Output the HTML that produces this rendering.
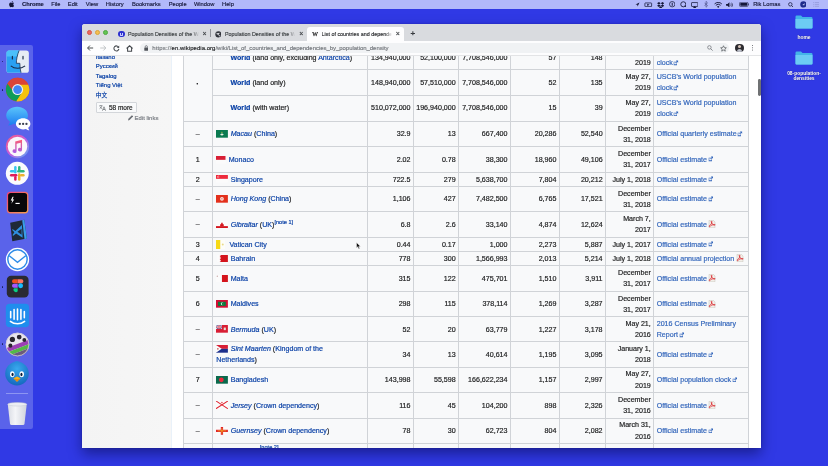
<!DOCTYPE html>
<html lang="en">
<head>
<meta charset="utf-8">
<title>List of countries and dependencies by population density - Wikipedia</title>
<style>
*{box-sizing:border-box;margin:0;padding:0}
html,body{width:828px;height:466px;overflow:hidden}
body{position:relative;background:#3039e5;font-family:"Liberation Sans","Noto Sans CJK SC",sans-serif;color:#202122}
.abs{position:absolute}
#root{position:absolute;left:0;top:0;width:828px;height:466px;will-change:transform;overflow:hidden}
/* desktop */
#desk{position:absolute;left:0;top:0;width:828px;height:466px;background:#3039e5}
/* menu bar */
#menubar{position:absolute;left:0;top:0;width:828px;height:9px;background:#b2b9fa;font-size:5.75px;line-height:9px;color:#16183a;white-space:nowrap}
#menubar span{position:absolute;top:0}
#menubar b{font-weight:bold}
#menubar svg{position:absolute}
/* dock */
#dock{position:absolute;left:0;top:45px;width:33px;height:384px;background:#5a63ea;border-radius:0 2px 2px 0}
#dock .ic{position:absolute;left:6px;width:22px;height:22px}
#dock .dot{position:absolute;left:1.5px;width:1.6px;height:1.6px;border-radius:50%;background:#1a1d5c}
/* folders */
.folder{position:absolute;width:18px;height:14px}
.flabel{position:absolute;font-size:4.9px;font-weight:bold;color:#fff;text-align:center;width:60px;line-height:5.4px;text-shadow:0 0 1px rgba(0,0,40,.6)}
/* window */
#win{position:absolute;left:82px;top:24px;width:679px;height:424px;background:#fff;border-radius:3px 3px 0 0;overflow:hidden}
#shadow{position:absolute;left:82px;top:24px;width:679px;height:424px;border-radius:3px;box-shadow:0 6px 13px rgba(5,8,70,.5),0 0 2px rgba(5,8,70,.3)}
#tabbar{position:absolute;left:0;top:0;width:679px;height:17px;background:#d9dbdf}
#toolbar{position:absolute;left:0;top:17px;width:679px;height:14.5px;background:#fdfdfe;border-bottom:1px solid #e3e4e6}
.tl{position:absolute;top:6.3px;width:4.9px;height:4.9px;border-radius:50%}
.tabt{position:absolute;top:5.9px;height:8px;font-size:5.4px;line-height:8px;color:#3c4043;white-space:nowrap;overflow:hidden}
.tabx{position:absolute;top:6.3px;font-size:7px;line-height:8px;color:#3f4246;-webkit-text-stroke:.2px #3f4246}
#atab{position:absolute;left:224.6px;top:3px;width:97.4px;height:14px;background:#fdfdfe;border-radius:3px 3px 0 0}
#pill{position:absolute;left:57.5px;top:2px;width:589px;height:10.4px;border-radius:5.2px;background:#f0f2f4}
#url{position:absolute;left:70.2px;top:3.4px;font-size:5.98px;line-height:8px;white-space:nowrap;color:#74787d;letter-spacing:0}
#url b{font-weight:normal;color:#222426}
/* page */
#page{position:absolute;left:0;top:31px;width:679px;height:393px;background:#fff;overflow:hidden}
#side{position:absolute;left:0;top:31px;width:88.6px;height:393px;background:linear-gradient(90deg,#f4f4f4,#f6f6f6)}
#sideline{position:absolute;left:88.6px;top:31px;width:1px;height:393px;background:#e9f1f9}
.lang{position:absolute;left:13.8px;font-size:5.95px;line-height:8px;color:#0a41a6;white-space:nowrap}
#more{position:absolute;left:13.8px;top:78px;width:40.8px;height:11.4px;border:1px solid #d3d6da;background:#f9fafb;border-radius:1px;font-size:6.5px;line-height:9.6px;color:#222;white-space:nowrap}
#edit{position:absolute;left:52.6px;top:90px;font-size:5.95px;line-height:8px;color:#7a7e84;white-space:nowrap}
#sbar{position:absolute;left:675.9px;top:55px;width:2.8px;height:16.6px;border-radius:1.4px;background:#6f7173}
/* table */
.tbg{position:absolute;background:#f8f9fa}
.c{position:absolute;display:flex;align-items:center;font-size:7.1px;line-height:11.3px;padding:0 2.8px;white-space:nowrap;color:#202122}
.c>div{width:100%;position:relative;top:1px}
.rk{justify-content:center;text-align:center}
.nu{text-align:right}
.nm,.sr{text-align:left}
.nm{padding-left:4px}
.sr{padding-left:3.1px}
.c,.lang,#more,#edit{-webkit-text-stroke:.18px currentColor}
#menubar,.tabt,#url{-webkit-text-stroke:.15px currentColor}
.c a{color:#0a41a6}
.c a.x{color:#3366bb}
.c sup{font-size:5.6px;line-height:1;vertical-align:baseline;position:relative;top:-2.4px}
.fl{display:inline-block;vertical-align:-1.5px;margin-right:.5px}
.vn{margin-left:3.6px}
.ext{display:inline-block;margin-left:0.6px;vertical-align:-0.3px}
.pdf{display:inline-block;vertical-align:-1.4px;margin-left:-0.6px}
.hl{position:absolute;height:1px;background:#d0d3d7}
.vl{position:absolute;width:1px;background:#d0d3d7}
.cv{position:absolute;background:#f8f9fa}
#cursor{position:absolute;left:356.3px;top:241.6px}
</style>
</head>
<body>
<div id="root">
<div id="desk"></div>

<!-- menu bar -->
<div id="menubar">
<svg style="left:8.6px;top:1.2px" width="5.2" height="6.4" viewBox="0 0 26 32"><path d="M21.500 17c0-4 3.300-5.800 3.400-5.900-1.900-2.700-4.700-3.100-5.700-3.100-2.400-.2-4.700 1.400-6 1.400-1.200 0-3.100-1.400-5.100-1.300C5.500 8.100 3.100 9.600 1.800 11.900-.9 16.600 1.100 23.600 3.700 27.400 5 29.300 6.500 31.400 8.500 31.300c2-.1 2.700-1.300 5.100-1.300 2.400 0 3 1.300 5.100 1.200 2.100 0 3.500-1.900 4.700-3.800 1.500-2.200 2.100-4.300 2.100-4.400-.1 0-4-1.500-4-6zM17.600 5.300C18.700 4 19.400 2.200 19.200.400c-1.500.1-3.400 1-4.500 2.300-1 1.100-1.900 3-1.600 4.700 1.700.1 3.400-.9 4.500-2.100z" fill="#16183a"/></svg>
<span style="left:22px"><b>Chrome</b></span>
<span style="left:51.3px">File</span>
<span style="left:67.8px">Edit</span>
<span style="left:85.8px">View</span>
<span style="left:105.8px">History</span>
<span style="left:131.9px">Bookmarks</span>
<span style="left:168.7px">People</span>
<span style="left:193.9px">Window</span>
<span style="left:222px">Help</span>
<!-- right status icons -->
<svg style="left:634.5px;top:2px" width="5" height="5" viewBox="0 0 10 10"><path d="M9 1L1 4.800l3.600.6.600 3.600z" fill="#16183a"/></svg>
<svg style="left:644px;top:1.800px" width="8.500" height="5.600" viewBox="0 0 17 11"><rect x="1.800" y="1.800" width="13.400" height="7.400" rx="1" fill="none" stroke="#16183a" stroke-width="1.500"/><path d="M6.500 3.300l4.500 2.200-4.500 2.200z" fill="#16183a"/></svg>
<svg style="left:656.500px;top:1.500px" width="7.400" height="6.400" viewBox="0 0 15 13"><path d="M4 0L0 2.600 4 5.200 7.500 2.600zM11 0L7.500 2.600 11 5.200 15 2.600zM0 7.600L4 10.200 7.500 7.600 4 5.200zM11 5.200L7.500 7.600 11 10.200 15 7.600zM4 11l3.500 2.200L11 11 7.500 8.700z" fill="#16183a"/></svg>
<svg style="left:668.600px;top:1.400px" width="6.400" height="6.400" viewBox="0 0 13 13"><circle cx="6.500" cy="6.500" r="5.500" fill="none" stroke="#16183a" stroke-width="1.500"/><rect x="5.500" y="3" width="2" height="7" rx="1" fill="#16183a"/></svg>
<svg style="left:679.700px;top:1.400px" width="6.600" height="6.600" viewBox="0 0 13 13"><circle cx="6.500" cy="6.500" r="5" fill="none" stroke="#16183a" stroke-width="1.700"/><path d="M9.500 9.500l2.500 2.500" stroke="#16183a" stroke-width="1.700"/></svg>
<svg style="left:690.500px;top:1.600px" width="7.400" height="6" viewBox="0 0 15 12"><rect x="1" y="1" width="13" height="8" rx="1" fill="none" stroke="#16183a" stroke-width="1.500"/><path d="M4 12l3.500-4 3.500 4z" fill="#16183a"/></svg>
<svg style="left:703.500px;top:1.300px" width="4.600" height="6.600" viewBox="0 0 9 13"><path d="M1 3.500l6 6-3 2.800V.700l3 2.800-6 6" fill="none" stroke="#3c4078" stroke-width="1.100"/></svg>
<svg style="left:714px;top:1.600px" width="8.400" height="6" viewBox="0 0 17 12"><path d="M8.500 12l2.400-2.900a3.400 3.400 0 0 0-4.800 0z" fill="#16183a"/><path d="M3.700 6.600a6.800 6.800 0 0 1 9.600 0M1.200 3.800a10.400 10.400 0 0 1 14.600 0" fill="none" stroke="#16183a" stroke-width="1.900"/></svg>
<svg style="left:726px;top:1.700px" width="7.400" height="5.800" viewBox="0 0 15 12"><path d="M0 4h3l4-3.500v11L3 8H0z" fill="#16183a"/><path d="M9.500 3.500a3.500 3.500 0 0 1 0 5M11.500 1.500a6.300 6.300 0 0 1 0 9" fill="none" stroke="#16183a" stroke-width="1.300"/></svg>
<svg style="left:738.600px;top:2.200px" width="10.400" height="4.800" viewBox="0 0 21 10"><rect x=".7" y=".7" width="17.600" height="8.600" rx="2" fill="none" stroke="#16183a" stroke-width="1.200"/><rect x="2.300" y="2.300" width="14.400" height="5.400" rx=".8" fill="#16183a"/><rect x="19.300" y="3.200" width="1.500" height="3.600" rx=".6" fill="#16183a"/></svg>
<span style="left:753.200px">Rik Lomas</span>
<svg style="left:787.500px;top:1.700px" width="5.800" height="5.800" viewBox="0 0 12 12"><circle cx="4.800" cy="4.800" r="3.600" fill="none" stroke="#16183a" stroke-width="1.500"/><path d="M7.500 7.500l3.700 3.700" stroke="#16183a" stroke-width="1.600"/></svg>
<svg style="left:799.700px;top:1.200px" width="6.800" height="6.800" viewBox="0 0 14 14"><circle cx="7" cy="7" r="6.500" fill="#1d2a8c"/><path d="M4 9l6-4.500L8.200 9.800 7 7.600z" fill="#dfe4ff"/></svg>
<svg style="left:812.500px;top:2.200px" width="6.400" height="4.800" viewBox="0 0 13 10"><path d="M0 1h1.600M3.400 1H13M0 5h1.600M3.400 5H13M0 9h1.600M3.400 9H13" stroke="#8f95d6" stroke-width="1.500"/></svg>
</div>

<!-- desktop folders -->
<svg class="folder" style="left:795px;top:15px" viewBox="0 0 36 28"><path d="M1 3.500Q1 1 3.500 1H12l3 3h17.500Q35 4 35 6.500V25q0 2-2 2H3q-2 0-2-2z" fill="#43b4e8"/><path d="M1 8h34v17q0 2-2 2H3q-2 0-2-2z" fill="#6ccbf4"/></svg>
<div class="flabel" style="left:774px;top:34.600px">home</div>
<svg class="folder" style="left:795px;top:51.300px" viewBox="0 0 36 28"><path d="M1 3.500Q1 1 3.500 1H12l3 3h17.500Q35 4 35 6.500V25q0 2-2 2H3q-2 0-2-2z" fill="#43b4e8"/><path d="M1 8h34v17q0 2-2 2H3q-2 0-2-2z" fill="#6ccbf4"/></svg>
<div class="flabel" style="left:774px;top:70.600px">08-population-<br>densities</div>

<!-- dock -->
<div id="dock">
<div class="dot" style="top:15.600px"></div>
<div class="dot" style="top:44px"></div>
<div class="dot" style="top:241.200px"></div>
<div class="dot" style="top:298.200px"></div>
<!-- finder -->
<svg class="ic" style="top:4.7px;left:5.5px;width:23.4px;height:23.4px" viewBox="0 0 44 44"><defs><clipPath id="fc"><rect x="1" y="1" width="42" height="42" rx="5"/></clipPath></defs><g clip-path="url(#fc)"><rect width="44" height="44" fill="#e6ecf4"/><path d="M0 0H25C21 10 19.500 18 19.500 25H26C26 32 27 38 28.500 44H0z" fill="#2aa0f2"/><path d="M0 0H25C23 5 22 8 21 12H0z" fill="#4cc0fa"/><path d="M9 30c7 6 19 6 27 0" fill="none" stroke="#1b2b48" stroke-width="2"/><path d="M12 12v5M32 12v5" stroke="#1b2b48" stroke-width="2.200" stroke-linecap="round"/><path d="M25 0C21 10 19.500 18 19.500 25H26C26 32 27 38 28.500 44" fill="none" stroke="#1b2b48" stroke-width="1.400"/></g></svg>
<!-- chrome -->
<svg class="ic" style="top:32.2px;left:4.6px;width:25.2px;height:25.2px" viewBox="0 0 44 44"><circle cx="22" cy="22" r="20.500" fill="#db4437"/><path d="M22 22L4.200 11.800A20.500 20.500 0 0 0 20 42.400L30 27z" fill="#0f9d58"/><path d="M22 22H42.400A20.500 20.500 0 0 1 20 42.400L30.500 26z" fill="#f4c20d"/><path d="M22 13H40.400A20.500 20.500 0 0 1 42.400 22 20.500 20.500 0 0 1 20 42.400L30 27z" fill="#f4c20d"/><path d="M4.200 11.800A20.500 20.500 0 0 1 40.400 13H22L13 23z" fill="#db4437"/><circle cx="22" cy="22" r="9.600" fill="#f1f1f1"/><circle cx="22" cy="22" r="7.600" fill="#4285f4"/></svg>
<!-- messages -->
<svg class="ic" style="top:60.4px;left:4.6px;width:26.6px;height:26.6px" viewBox="0 0 44 44"><defs><linearGradient id="mg" x1="0" y1="0" x2="0" y2="1"><stop offset="0" stop-color="#5bc4fb"/><stop offset="1" stop-color="#1b7cf0"/></linearGradient></defs><path d="M20 3c10 0 18 6.500 18 14.500S30 32 20 32c-2 0-4-.3-5.800-.8C11 33.500 7.500 34 5 34c1.500-1.800 2.800-4 3-6.300C4.400 25 2 21.500 2 17.500 2 9.500 10 3 20 3z" fill="url(#mg)"/><path d="M30 22c6.600 0 12 4 12 9.200 0 2.600-1.400 5-3.700 6.600.2 1.500 1 3 2 4-2 0-4-.6-5.600-2-1.500.4-3 .6-4.700.6-6.600 0-12-4.100-12-9.200S23.400 22 30 22z" fill="#fff"/><circle cx="24.500" cy="31.300" r="1.900" fill="#3a3f50"/><circle cx="30" cy="31.300" r="1.900" fill="#3a3f50"/><circle cx="35.500" cy="31.300" r="1.900" fill="#3a3f50"/></svg>
<!-- itunes -->
<svg class="ic" style="top:88.5px;left:4.7px;width:25.0px;height:25.0px" viewBox="0 0 44 44"><defs><linearGradient id="ig" x1="0" y1="0" x2="1" y2="1"><stop offset="0" stop-color="#fb5c74"/><stop offset=".5" stop-color="#c75ce0"/><stop offset="1" stop-color="#4fb0f5"/></linearGradient><linearGradient id="ig2" x1="0" y1="0" x2="0" y2="1"><stop offset="0" stop-color="#fb5c74"/><stop offset="1" stop-color="#a85ce8"/></linearGradient></defs><circle cx="22" cy="22" r="20.500" fill="url(#ig)"/><circle cx="22" cy="22" r="17.200" fill="#fbf7fb"/><path d="M18 13l12-2.800v17.300a3.600 3.200 0 1 1-2.400-3V15.500l-7.200 1.700v13a3.600 3.200 0 1 1-2.400-3z" fill="url(#ig2)"/></svg>
<!-- slack -->
<svg class="ic" style="top:116.4px;left:4.9px;width:24.6px;height:24.6px" viewBox="0 0 44 44"><circle cx="22" cy="22" r="20.500" fill="#fbfbfd"/><g stroke-width="4.400" stroke-linecap="round"><path d="M18.500 11v9" stroke="#36c5f0"/><path d="M11 18.500h4" stroke="#36c5f0"/><path d="M24 18.500h9" stroke="#2eb67d"/><path d="M25.500 11v4" stroke="#2eb67d"/><path d="M25.500 24v9" stroke="#ecb22e"/><path d="M29 25.500h4" stroke="#ecb22e"/><path d="M11 25.500h9" stroke="#e01e5a"/><path d="M18.500 29v4" stroke="#e01e5a"/></g></svg>
<!-- terminal (hyper) -->
<svg class="ic" style="top:146.2px;left:5.6px;width:23.2px;height:23.2px" viewBox="0 0 44 44"><defs><linearGradient id="hg" x1="0" y1="0" x2="1" y2="1"><stop offset="0" stop-color="#f0417c"/><stop offset="1" stop-color="#f5a04a"/></linearGradient></defs><rect x="1.500" y="1.500" width="41" height="41" rx="7" fill="url(#hg)"/><rect x="4" y="4" width="36" height="36" rx="5" fill="#07070a"/><path d="M12.500 11l-3.500 7h3l-1.800 6 5.300-8h-3l2-5z" fill="#fff"/><rect x="18" y="22.500" width="8" height="2.200" fill="#fff"/></svg>
<!-- vscode -->
<svg class="ic" style="top:174.1px;left:5.7px;width:23.0px;height:23.0px" viewBox="0 0 44 44"><path d="M8 7L35 1.500l5 36L12 42.500z" fill="#1f2937"/><path d="M35 1.500l5 36-4.500 1L31 2.300z" fill="#3a9de8"/><path d="M30.500 11.500L18 23l-5-3.500-1.500 1.300 4.500 4.700-3.700 5.500 1.800 1 5.200-4.500 12.500 8.500z M29.800 18.500v11.500l-8-5.800z" fill="#2f8fe0" fill-rule="evenodd"/></svg>
<!-- airmail -->
<svg class="ic" style="top:201.5px;left:4.7px;width:25.0px;height:25.0px" viewBox="0 0 44 44"><circle cx="22" cy="22" r="20.500" fill="#fdfeff"/><circle cx="22" cy="22" r="17" fill="none" stroke="#2d8be8" stroke-width="2.600"/><path d="M7.500 15.500L22 27l14.500-11.500" fill="none" stroke="#2d8be8" stroke-width="2.400"/></svg>
<!-- figma -->
<svg class="ic" style="top:230.3px;left:5.5px;width:23.4px;height:23.4px" viewBox="0 0 44 44"><rect x="1.500" y="1.500" width="41" height="41" rx="8" fill="#2a2a32"/><path d="M15 8h7v7.500h-7a3.750 3.750 0 0 1 0-7.500z" fill="#f24e1e"/><path d="M22 8h7a3.750 3.750 0 0 1 0 7.500h-7z" fill="#ff7262"/><path d="M15 16.500h7V24h-7a3.750 3.750 0 0 1 0-7.500z" fill="#a259ff"/><circle cx="27.500" cy="20.200" r="4.600" fill="#1abcfe"/><path d="M15 25h7v5.500a4.200 4.200 0 1 1-7-5.500z" fill="#0acf83"/></svg>
<!-- intercom -->
<svg class="ic" style="top:257.7px;left:4.7px;width:25.0px;height:25.0px" viewBox="0 0 44 44"><rect x="1.500" y="1.500" width="41" height="41" rx="7" fill="#1f8ded"/><g stroke="#fff" stroke-width="2.800" stroke-linecap="round"><path d="M10 15v11M16 11.500v17M22 10.500v19M28 11.500v17M34 15v11"/><path d="M9.500 32.500c7 5.500 18 5.500 25 0" fill="none"/></g></svg>
<!-- film -->
<svg class="ic" style="top:286.5px;left:4.7px;width:25.0px;height:25.0px" viewBox="0 0 44 44"><defs><clipPath id="cc"><circle cx="22" cy="22" r="20.500"/></clipPath></defs><circle cx="22" cy="22" r="20.500" fill="#e9e6ee"/><g clip-path="url(#cc)"><path d="M-2 30L46 12v8L-2 38z" fill="#9b3fb4"/><path d="M-2 38L46 20v7L-2 45z" fill="#54b848"/><path d="M-2 45L46 27v20H-2z" fill="#6b5a7c"/></g><circle cx="13" cy="13" r="4.600" fill="#2a2630"/><circle cx="25" cy="9" r="4.200" fill="#2a2630"/><circle cx="9.500" cy="24" r="3.600" fill="#2a2630"/><circle cx="34" cy="14" r="3.400" fill="#2a2630"/><circle cx="22" cy="22" r="20" fill="none" stroke="#cfc9d6" stroke-width="1.400"/></svg>
<!-- tweetbot -->
<svg class="ic" style="top:314.5px;left:4.2px;width:26.0px;height:26.0px" viewBox="0 0 44 44"><defs><radialGradient id="tg" cx=".5" cy=".3" r=".8"><stop offset="0" stop-color="#39a9ee"/><stop offset="1" stop-color="#0f5fb8"/></radialGradient></defs><circle cx="22" cy="23" r="20" fill="url(#tg)"/><path d="M15 4l7-2.500 7 2.500z" fill="#2a8ee0"/><ellipse cx="14" cy="24" rx="3.800" ry="5" fill="#fff"/><ellipse cx="30" cy="24" rx="3.800" ry="5" fill="#fff"/><ellipse cx="14.500" cy="24.500" rx="1.800" ry="3" fill="#0b1e3a"/><ellipse cx="29.500" cy="24.500" rx="1.800" ry="3" fill="#0b1e3a"/><path d="M16 31l6-3 6 3-6 6z" fill="#f7b31c"/><path d="M16 31l6 1.500 6-1.500-6 6z" fill="#e88a14"/></svg>
<div class="abs" style="left:6px;top:347.500px;width:22px;height:.7px;background:#8d95f2"></div>
<!-- trash -->
<svg class="ic" style="top:357px;left:7px;width:20.500px;height:23.500px" viewBox="0 0 41 47"><defs><linearGradient id="trg" x1="0" y1="0" x2="1" y2="0"><stop offset="0" stop-color="#d9dce4"/><stop offset=".4" stop-color="#f4f5f8"/><stop offset="1" stop-color="#cfd3dc"/></linearGradient></defs><path d="M1.500 4h38l-4.500 39.500q-.3 2.500-3 2.500H9q-2.700 0-3-2.500z" fill="url(#trg)"/><ellipse cx="20.500" cy="4.500" rx="19" ry="3.600" fill="#eceef3" stroke="#c3c7d2" stroke-width="1"/></svg>

</div>

<!-- window -->
<div id="shadow"></div>
<div id="win">
<div id="page"></div>
<div id="side"></div><div id="sideline"></div>
<div class="lang" style="top:29.200px">Italiano</div>
<div class="lang" style="top:38.100px">Русский</div>
<div class="lang" style="top:48.100px">Tagalog</div>
<div class="lang" style="top:56.900px">Tiếng Việt</div>
<div class="lang" style="top:67px;font-size:5.700px">中文</div>
<div id="more"><svg style="position:absolute;left:2.600px;top:1.900px" width="7" height="6" viewBox="0 0 14 12"><path d="M0.500 1.500H7M3.700 0v1.500M1.200 7.500C3.600 6.300 5.300 4 5.600 1.500M1.800 3.500C2.800 5.500 4.500 6.800 6.300 7.300" fill="none" stroke="#54595d" stroke-width="1.100"/><path d="M6.800 11.500L10 3.500l3.200 8M7.900 9h4.200" fill="none" stroke="#54595d" stroke-width="1.200"/></svg><span style="position:absolute;left:12.100px;top:0">58 more</span></div>
<div id="edit"><svg style="position:absolute;left:-6.600px;top:1.300px" width="5.400" height="5.400" viewBox="0 0 11 11"><path d="M0 11l.8-3.200L8 .6l2.400 2.400-7.200 7.200z" fill="#6a6e74"/></svg>Edit links</div>
<div class="tbg" style="left:101px;top:31px;width:565.5px;height:393px"></div>
<div class="c rk" style="left:101px;top:21.2px;width:29.3px;height:75.8px"><div><span style="font-weight:bold;font-size:8px">·</span></div></div>
<div class="c nm" style="left:130.3px;top:21.2px;width:155.2px;height:24.4px"><div><span class="fl" style="display:inline-block;width:11.7px;height:7.7px"></span>&nbsp;<b><a class="">World</a></b> (land only, excluding <a class="">Antarctica</a>)</div></div>
<div class="c nu" style="left:285.5px;top:21.2px;width:45.8px;height:24.4px"><div>134,940,000</div></div>
<div class="c nu" style="left:331.3px;top:21.2px;width:45.2px;height:24.4px"><div>52,100,000</div></div>
<div class="c nu" style="left:376.5px;top:21.2px;width:51.8px;height:24.4px"><div>7,708,546,000</div></div>
<div class="c nu" style="left:428.3px;top:21.2px;width:48.9px;height:24.4px"><div>57</div></div>
<div class="c nu" style="left:477.2px;top:21.2px;width:46.2px;height:24.4px"><div>148</div></div>
<div class="c nu" style="left:523.4px;top:21.2px;width:48.2px;height:24.4px"><div>May 27,<br>2019</div></div>
<div class="c sr" style="left:571.6px;top:21.2px;width:94.9px;height:24.4px"><div><a class="x">USCB's World population<br>clock</a><svg class="ext" viewBox="0 0 12 12" width="5.6" height="5.6"><path d="M1.5 3.5h5v1.2H2.7v4.6h4.6V7h1.2v4.5h-7z" fill="#36b"/><path d="M6 1h5v5L9.2 4.2 6.3 7.1 4.9 5.7 7.8 2.8z" fill="#36b"/></svg></div></div>
<div class="c nm" style="left:130.3px;top:45.6px;width:155.2px;height:25.7px"><div><span class="fl" style="display:inline-block;width:11.7px;height:7.7px"></span>&nbsp;<b><a class="">World</a></b> (land only)</div></div>
<div class="c nu" style="left:285.5px;top:45.6px;width:45.8px;height:25.7px"><div>148,940,000</div></div>
<div class="c nu" style="left:331.3px;top:45.6px;width:45.2px;height:25.7px"><div>57,510,000</div></div>
<div class="c nu" style="left:376.5px;top:45.6px;width:51.8px;height:25.7px"><div>7,708,546,000</div></div>
<div class="c nu" style="left:428.3px;top:45.6px;width:48.9px;height:25.7px"><div>52</div></div>
<div class="c nu" style="left:477.2px;top:45.6px;width:46.2px;height:25.7px"><div>135</div></div>
<div class="c nu" style="left:523.4px;top:45.6px;width:48.2px;height:25.7px"><div>May 27,<br>2019</div></div>
<div class="c sr" style="left:571.6px;top:45.6px;width:94.9px;height:25.7px"><div><a class="x">USCB's World population<br>clock</a><svg class="ext" viewBox="0 0 12 12" width="5.6" height="5.6"><path d="M1.5 3.5h5v1.2H2.7v4.6h4.6V7h1.2v4.5h-7z" fill="#36b"/><path d="M6 1h5v5L9.2 4.2 6.3 7.1 4.9 5.7 7.8 2.8z" fill="#36b"/></svg></div></div>
<div class="c nm" style="left:130.3px;top:71.3px;width:155.2px;height:25.7px"><div><span class="fl" style="display:inline-block;width:11.7px;height:7.7px"></span>&nbsp;<b><a class="">World</a></b> (with water)</div></div>
<div class="c nu" style="left:285.5px;top:71.3px;width:45.8px;height:25.7px"><div>510,072,000</div></div>
<div class="c nu" style="left:331.3px;top:71.3px;width:45.2px;height:25.7px"><div>196,940,000</div></div>
<div class="c nu" style="left:376.5px;top:71.3px;width:51.8px;height:25.7px"><div>7,708,546,000</div></div>
<div class="c nu" style="left:428.3px;top:71.3px;width:48.9px;height:25.7px"><div>15</div></div>
<div class="c nu" style="left:477.2px;top:71.3px;width:46.2px;height:25.7px"><div>39</div></div>
<div class="c nu" style="left:523.4px;top:71.3px;width:48.2px;height:25.7px"><div>May 27,<br>2019</div></div>
<div class="c sr" style="left:571.6px;top:71.3px;width:94.9px;height:25.7px"><div><a class="x">USCB's World population<br>clock</a><svg class="ext" viewBox="0 0 12 12" width="5.6" height="5.6"><path d="M1.5 3.5h5v1.2H2.7v4.6h4.6V7h1.2v4.5h-7z" fill="#36b"/><path d="M6 1h5v5L9.2 4.2 6.3 7.1 4.9 5.7 7.8 2.8z" fill="#36b"/></svg></div></div>
<div class="c rk" style="left:101px;top:97px;width:29.3px;height:25.8px"><div><span style="position:relative;top:-0.6px">–</span></div></div>
<div class="c nm" style="left:130.3px;top:97px;width:155.2px;height:25.8px"><div><svg class="fl" viewBox="0 0 23 15" width="11.9" height="7.7" preserveAspectRatio="none"><rect width="23" height="15" fill="#0a7a50"/><path d="M8 9.5 Q11.5 4 15 9.5 Q11.5 11.5 8 9.5Z" fill="#e8f0e0"/><circle cx="11.5" cy="4.3" r="1" fill="#f7d93a"/></svg>&nbsp;<i><a class="">Macau</a></i> (<a class="">China</a>)</div></div>
<div class="c nu" style="left:285.5px;top:97px;width:45.8px;height:25.8px"><div>32.9</div></div>
<div class="c nu" style="left:331.3px;top:97px;width:45.2px;height:25.8px"><div>13</div></div>
<div class="c nu" style="left:376.5px;top:97px;width:51.8px;height:25.8px"><div>667,400</div></div>
<div class="c nu" style="left:428.3px;top:97px;width:48.9px;height:25.8px"><div>20,286</div></div>
<div class="c nu" style="left:477.2px;top:97px;width:46.2px;height:25.8px"><div>52,540</div></div>
<div class="c nu" style="left:523.4px;top:97px;width:48.2px;height:25.8px"><div>December<br>31, 2018</div></div>
<div class="c sr" style="left:571.6px;top:97px;width:94.9px;height:25.8px"><div><a class="x">Official quarterly estimate</a><svg class="ext" viewBox="0 0 12 12" width="5.6" height="5.6"><path d="M1.5 3.5h5v1.2H2.7v4.6h4.6V7h1.2v4.5h-7z" fill="#36b"/><path d="M6 1h5v5L9.2 4.2 6.3 7.1 4.9 5.7 7.8 2.8z" fill="#36b"/></svg></div></div>
<div class="c rk" style="left:101px;top:122.8px;width:29.3px;height:25.2px"><div>1</div></div>
<div class="c nm" style="left:130.3px;top:122.8px;width:155.2px;height:25.2px"><div><svg class="fl" viewBox="0 0 23 15" width="9.5" style="vertical-align:-2px" height="7.7" preserveAspectRatio="none"><rect width="23" height="15" fill="#fbfbfb"/><rect width="23" height="7.5" fill="#d81e34"/></svg><span style="margin-left:0.4px">&nbsp;<a class="">Monaco</a></span></div></div>
<div class="c nu" style="left:285.5px;top:122.8px;width:45.8px;height:25.2px"><div>2.02</div></div>
<div class="c nu" style="left:331.3px;top:122.8px;width:45.2px;height:25.2px"><div>0.78</div></div>
<div class="c nu" style="left:376.5px;top:122.8px;width:51.8px;height:25.2px"><div>38,300</div></div>
<div class="c nu" style="left:428.3px;top:122.8px;width:48.9px;height:25.2px"><div>18,960</div></div>
<div class="c nu" style="left:477.2px;top:122.8px;width:46.2px;height:25.2px"><div>49,106</div></div>
<div class="c nu" style="left:523.4px;top:122.8px;width:48.2px;height:25.2px"><div>December<br>31, 2017</div></div>
<div class="c sr" style="left:571.6px;top:122.8px;width:94.9px;height:25.2px"><div><a class="x">Official estimate</a><svg class="ext" viewBox="0 0 12 12" width="5.6" height="5.6"><path d="M1.5 3.5h5v1.2H2.7v4.6h4.6V7h1.2v4.5h-7z" fill="#36b"/><path d="M6 1h5v5L9.2 4.2 6.3 7.1 4.9 5.7 7.8 2.8z" fill="#36b"/></svg></div></div>
<div class="c rk" style="left:101px;top:148px;width:29.3px;height:14.5px"><div>2</div></div>
<div class="c nm" style="left:130.3px;top:148px;width:155.2px;height:14.5px"><div><svg class="fl" viewBox="0 0 23 15" width="11.9" height="7.7" preserveAspectRatio="none"><rect width="23" height="15" fill="#fbfbfb"/><rect width="23" height="7.5" fill="#ee2a3c"/><circle cx="5" cy="3.8" r="2.2" fill="#fff"/><circle cx="6" cy="3.8" r="2" fill="#ee2a3c"/></svg>&nbsp;<a class="">Singapore</a></div></div>
<div class="c nu" style="left:285.5px;top:148px;width:45.8px;height:14.5px"><div>722.5</div></div>
<div class="c nu" style="left:331.3px;top:148px;width:45.2px;height:14.5px"><div>279</div></div>
<div class="c nu" style="left:376.5px;top:148px;width:51.8px;height:14.5px"><div>5,638,700</div></div>
<div class="c nu" style="left:428.3px;top:148px;width:48.9px;height:14.5px"><div>7,804</div></div>
<div class="c nu" style="left:477.2px;top:148px;width:46.2px;height:14.5px"><div>20,212</div></div>
<div class="c nu" style="left:523.4px;top:148px;width:48.2px;height:14.5px"><div>July 1, 2018</div></div>
<div class="c sr" style="left:571.6px;top:148px;width:94.9px;height:14.5px"><div><a class="x">Official estimate</a><svg class="ext" viewBox="0 0 12 12" width="5.6" height="5.6"><path d="M1.5 3.5h5v1.2H2.7v4.6h4.6V7h1.2v4.5h-7z" fill="#36b"/><path d="M6 1h5v5L9.2 4.2 6.3 7.1 4.9 5.7 7.8 2.8z" fill="#36b"/></svg></div></div>
<div class="c rk" style="left:101px;top:162.5px;width:29.3px;height:25.1px"><div><span style="position:relative;top:-0.6px">–</span></div></div>
<div class="c nm" style="left:130.3px;top:162.5px;width:155.2px;height:25.1px"><div><svg class="fl" viewBox="0 0 23 15" width="11.9" height="7.7" preserveAspectRatio="none"><rect width="23" height="15" fill="#e3301c"/><circle cx="11.5" cy="7.5" r="3.6" fill="#fbe9e4"/><circle cx="11.5" cy="7.5" r="1.2" fill="#e3301c"/></svg>&nbsp;<i><a class="">Hong Kong</a></i> (<a class="">China</a>)</div></div>
<div class="c nu" style="left:285.5px;top:162.5px;width:45.8px;height:25.1px"><div>1,106</div></div>
<div class="c nu" style="left:331.3px;top:162.5px;width:45.2px;height:25.1px"><div>427</div></div>
<div class="c nu" style="left:376.5px;top:162.5px;width:51.8px;height:25.1px"><div>7,482,500</div></div>
<div class="c nu" style="left:428.3px;top:162.5px;width:48.9px;height:25.1px"><div>6,765</div></div>
<div class="c nu" style="left:477.2px;top:162.5px;width:46.2px;height:25.1px"><div>17,521</div></div>
<div class="c nu" style="left:523.4px;top:162.5px;width:48.2px;height:25.1px"><div>December<br>31, 2018</div></div>
<div class="c sr" style="left:571.6px;top:162.5px;width:94.9px;height:25.1px"><div><a class="x">Official estimate</a><svg class="ext" viewBox="0 0 12 12" width="5.6" height="5.6"><path d="M1.5 3.5h5v1.2H2.7v4.6h4.6V7h1.2v4.5h-7z" fill="#36b"/><path d="M6 1h5v5L9.2 4.2 6.3 7.1 4.9 5.7 7.8 2.8z" fill="#36b"/></svg></div></div>
<div class="c rk" style="left:101px;top:187.6px;width:29.3px;height:25.7px"><div><span style="position:relative;top:-0.6px">–</span></div></div>
<div class="c nm" style="left:130.3px;top:187.6px;width:155.2px;height:25.7px"><div><svg class="fl" viewBox="0 0 23 15" width="11.9" height="7.7" preserveAspectRatio="none"><rect width="23" height="15" fill="#fbfbfb"/><rect y="10" width="23" height="5" fill="#d4141c"/><path d="M8 10V6.5h2V3.5h3v3h2V10z" fill="#d4141c"/></svg>&nbsp;<i><a class="">Gibraltar</a></i> (<a class="">UK</a>)<sup><a class="">[note 1]</a></sup></div></div>
<div class="c nu" style="left:285.5px;top:187.6px;width:45.8px;height:25.7px"><div>6.8</div></div>
<div class="c nu" style="left:331.3px;top:187.6px;width:45.2px;height:25.7px"><div>2.6</div></div>
<div class="c nu" style="left:376.5px;top:187.6px;width:51.8px;height:25.7px"><div>33,140</div></div>
<div class="c nu" style="left:428.3px;top:187.6px;width:48.9px;height:25.7px"><div>4,874</div></div>
<div class="c nu" style="left:477.2px;top:187.6px;width:46.2px;height:25.7px"><div>12,624</div></div>
<div class="c nu" style="left:523.4px;top:187.6px;width:48.2px;height:25.7px"><div>March 7,<br>2017</div></div>
<div class="c sr" style="left:571.6px;top:187.6px;width:94.9px;height:25.7px"><div><a class="x">Official estimate</a> <svg class="pdf" viewBox="0 0 16 16" width="8" height="8"><path d="M2 0.5h8.5L14 4v11.5H2z" fill="#f3efe9" stroke="#b9b2a8" stroke-width=".8"/><path d="M3 11c3-1 5-5 4.6-8.2-.2-1.2-1.6-.8-1.2.8C7.200 7 10 10 13.400 10.400 14.800 10.600 14.600 9 13 9 9.500 9 5 11 3.600 13.200 2.800 14.400 1.600 12 3 11z" fill="none" stroke="#d8232a" stroke-width="1.5"/></svg></div></div>
<div class="c rk" style="left:101px;top:213.3px;width:29.3px;height:14.1px"><div>3</div></div>
<div class="c nm" style="left:130.3px;top:213.3px;width:155.2px;height:14.1px"><div><svg class="fl" viewBox="0 0 18 18" width="9" height="9" style="vertical-align:-2.1px"><rect width="9" height="18" fill="#f7d917"/><rect x="9" width="9" height="18" fill="#fdfdf8"/><circle cx="13.5" cy="9" r="2" fill="#e8d98a"/></svg><span class="vn"><a class="">Vatican City</a></span></div></div>
<div class="c nu" style="left:285.5px;top:213.3px;width:45.8px;height:14.1px"><div>0.44</div></div>
<div class="c nu" style="left:331.3px;top:213.3px;width:45.2px;height:14.1px"><div>0.17</div></div>
<div class="c nu" style="left:376.5px;top:213.3px;width:51.8px;height:14.1px"><div>1,000</div></div>
<div class="c nu" style="left:428.3px;top:213.3px;width:48.9px;height:14.1px"><div>2,273</div></div>
<div class="c nu" style="left:477.2px;top:213.3px;width:46.2px;height:14.1px"><div>5,887</div></div>
<div class="c nu" style="left:523.4px;top:213.3px;width:48.2px;height:14.1px"><div>July 1, 2017</div></div>
<div class="c sr" style="left:571.6px;top:213.3px;width:94.9px;height:14.1px"><div><a class="x">Official estimate</a><svg class="ext" viewBox="0 0 12 12" width="5.6" height="5.6"><path d="M1.5 3.5h5v1.2H2.7v4.6h4.6V7h1.2v4.5h-7z" fill="#36b"/><path d="M6 1h5v5L9.2 4.2 6.3 7.1 4.9 5.7 7.8 2.8z" fill="#36b"/></svg></div></div>
<div class="c rk" style="left:101px;top:227.4px;width:29.3px;height:14.3px"><div>4</div></div>
<div class="c nm" style="left:130.3px;top:227.4px;width:155.2px;height:14.3px"><div><svg class="fl" viewBox="0 0 23 15" width="11.9" height="7.7" preserveAspectRatio="none"><rect width="23" height="15" fill="#f8f9fa"/><rect x="2" width="21" height="15" fill="#fbfbfb"/><path d="M7 0H23V15H7L10 13.5 7 12 10 10.5 7 9 10 7.5 7 6 10 4.5 7 3 10 1.5Z" fill="#d4141c"/></svg>&nbsp;<a class="">Bahrain</a></div></div>
<div class="c nu" style="left:285.5px;top:227.4px;width:45.8px;height:14.3px"><div>778</div></div>
<div class="c nu" style="left:331.3px;top:227.4px;width:45.2px;height:14.3px"><div>300</div></div>
<div class="c nu" style="left:376.5px;top:227.4px;width:51.8px;height:14.3px"><div>1,566,993</div></div>
<div class="c nu" style="left:428.3px;top:227.4px;width:48.9px;height:14.3px"><div>2,013</div></div>
<div class="c nu" style="left:477.2px;top:227.4px;width:46.2px;height:14.3px"><div>5,214</div></div>
<div class="c nu" style="left:523.4px;top:227.4px;width:48.2px;height:14.3px"><div>July 1, 2018</div></div>
<div class="c sr" style="left:571.6px;top:227.4px;width:94.9px;height:14.3px"><div><a class="x">Official annual projection</a> <svg class="pdf" viewBox="0 0 16 16" width="8" height="8"><path d="M2 0.5h8.5L14 4v11.5H2z" fill="#f3efe9" stroke="#b9b2a8" stroke-width=".8"/><path d="M3 11c3-1 5-5 4.6-8.2-.2-1.2-1.6-.8-1.2.8C7.200 7 10 10 13.400 10.400 14.800 10.600 14.600 9 13 9 9.500 9 5 11 3.600 13.200 2.800 14.400 1.600 12 3 11z" fill="none" stroke="#d8232a" stroke-width="1.5"/></svg></div></div>
<div class="c rk" style="left:101px;top:241.7px;width:29.3px;height:25.3px"><div>5</div></div>
<div class="c nm" style="left:130.3px;top:241.7px;width:155.2px;height:25.3px"><div><svg class="fl" viewBox="0 0 23 15" width="11.9" height="7.7" preserveAspectRatio="none"><rect width="23" height="15" fill="#fbfbfb"/><rect x="11.5" width="11.5" height="15" fill="#d4141c"/><circle cx="2.5" cy="2.5" r="1.3" fill="#c9a9a9"/></svg>&nbsp;<a class="">Malta</a></div></div>
<div class="c nu" style="left:285.5px;top:241.7px;width:45.8px;height:25.3px"><div>315</div></div>
<div class="c nu" style="left:331.3px;top:241.7px;width:45.2px;height:25.3px"><div>122</div></div>
<div class="c nu" style="left:376.5px;top:241.7px;width:51.8px;height:25.3px"><div>475,701</div></div>
<div class="c nu" style="left:428.3px;top:241.7px;width:48.9px;height:25.3px"><div>1,510</div></div>
<div class="c nu" style="left:477.2px;top:241.7px;width:46.2px;height:25.3px"><div>3,911</div></div>
<div class="c nu" style="left:523.4px;top:241.7px;width:48.2px;height:25.3px"><div>December<br>31, 2017</div></div>
<div class="c sr" style="left:571.6px;top:241.7px;width:94.9px;height:25.3px"><div><a class="x">Official estimate</a> <svg class="pdf" viewBox="0 0 16 16" width="8" height="8"><path d="M2 0.5h8.5L14 4v11.5H2z" fill="#f3efe9" stroke="#b9b2a8" stroke-width=".8"/><path d="M3 11c3-1 5-5 4.6-8.2-.2-1.2-1.6-.8-1.2.8C7.200 7 10 10 13.400 10.400 14.800 10.600 14.600 9 13 9 9.500 9 5 11 3.600 13.200 2.800 14.400 1.600 12 3 11z" fill="none" stroke="#d8232a" stroke-width="1.5"/></svg></div></div>
<div class="c rk" style="left:101px;top:267px;width:29.3px;height:25.7px"><div>6</div></div>
<div class="c nm" style="left:130.3px;top:267px;width:155.2px;height:25.7px"><div><svg class="fl" viewBox="0 0 23 15" width="11.9" height="7.7" preserveAspectRatio="none"><rect width="23" height="15" fill="#d21034"/><rect x="4" y="3.5" width="15" height="8" fill="#0a7a3c"/><circle cx="12" cy="7.5" r="2.6" fill="#fff"/><circle cx="13.2" cy="7.5" r="2.3" fill="#0a7a3c"/></svg>&nbsp;<a class="">Maldives</a></div></div>
<div class="c nu" style="left:285.5px;top:267px;width:45.8px;height:25.7px"><div>298</div></div>
<div class="c nu" style="left:331.3px;top:267px;width:45.2px;height:25.7px"><div>115</div></div>
<div class="c nu" style="left:376.5px;top:267px;width:51.8px;height:25.7px"><div>378,114</div></div>
<div class="c nu" style="left:428.3px;top:267px;width:48.9px;height:25.7px"><div>1,269</div></div>
<div class="c nu" style="left:477.2px;top:267px;width:46.2px;height:25.7px"><div>3,287</div></div>
<div class="c nu" style="left:523.4px;top:267px;width:48.2px;height:25.7px"><div>December<br>31, 2017</div></div>
<div class="c sr" style="left:571.6px;top:267px;width:94.9px;height:25.7px"><div><a class="x">Official estimate</a> <svg class="pdf" viewBox="0 0 16 16" width="8" height="8"><path d="M2 0.5h8.5L14 4v11.5H2z" fill="#f3efe9" stroke="#b9b2a8" stroke-width=".8"/><path d="M3 11c3-1 5-5 4.6-8.2-.2-1.2-1.6-.8-1.2.8C7.200 7 10 10 13.400 10.400 14.800 10.600 14.600 9 13 9 9.500 9 5 11 3.600 13.200 2.800 14.400 1.600 12 3 11z" fill="none" stroke="#d8232a" stroke-width="1.5"/></svg></div></div>
<div class="c rk" style="left:101px;top:292.7px;width:29.3px;height:25.1px"><div><span style="position:relative;top:-0.6px">–</span></div></div>
<div class="c nm" style="left:130.3px;top:292.7px;width:155.2px;height:25.1px"><div><svg class="fl" viewBox="0 0 23 15" width="11.9" height="7.7" preserveAspectRatio="none"><rect width="23" height="15" fill="#d81e34"/><rect width="11.5" height="7.5" fill="#1b2f7c"/><path d="M0 0L11.5 7.5M11.5 0L0 7.5" stroke="#fff" stroke-width="1.6"/><path d="M5.75 0V7.5M0 3.75H11.5" stroke="#fff" stroke-width="2.4"/><path d="M5.75 0V7.5M0 3.75H11.5" stroke="#d81e34" stroke-width="1.2"/><rect x="15" y="5" width="4" height="5" fill="#e8e0d0"/></svg>&nbsp;<i><a class="">Bermuda</a></i> (<a class="">UK</a>)</div></div>
<div class="c nu" style="left:285.5px;top:292.7px;width:45.8px;height:25.1px"><div>52</div></div>
<div class="c nu" style="left:331.3px;top:292.7px;width:45.2px;height:25.1px"><div>20</div></div>
<div class="c nu" style="left:376.5px;top:292.7px;width:51.8px;height:25.1px"><div>63,779</div></div>
<div class="c nu" style="left:428.3px;top:292.7px;width:48.9px;height:25.1px"><div>1,227</div></div>
<div class="c nu" style="left:477.2px;top:292.7px;width:46.2px;height:25.1px"><div>3,178</div></div>
<div class="c nu" style="left:523.4px;top:292.7px;width:48.2px;height:25.1px"><div>May 21,<br>2016</div></div>
<div class="c sr" style="left:571.6px;top:292.7px;width:94.9px;height:25.1px"><div><a class="x">2016 Census Preliminary<br>Report</a><svg class="ext" viewBox="0 0 12 12" width="5.6" height="5.6"><path d="M1.5 3.5h5v1.2H2.7v4.6h4.6V7h1.2v4.5h-7z" fill="#36b"/><path d="M6 1h5v5L9.2 4.2 6.3 7.1 4.9 5.7 7.8 2.8z" fill="#36b"/></svg></div></div>
<div class="c rk" style="left:101px;top:317.8px;width:29.3px;height:25.3px"><div><span style="position:relative;top:-0.6px">–</span></div></div>
<div class="c nm" style="left:130.3px;top:317.8px;width:155.2px;height:25.3px"><div><svg class="fl" viewBox="0 0 23 15" width="11.9" height="7.7" preserveAspectRatio="none"><rect width="23" height="7.5" fill="#d81e34"/><rect y="7.5" width="23" height="7.5" fill="#1b2f8c"/><path d="M0 0L11 7.5 0 15z" fill="#fbfbfb"/><circle cx="3.6" cy="7.5" r="1.7" fill="#c66"/></svg>&nbsp;<i><a class="">Sint Maarten</a></i> (<a class="">Kingdom of the<br>Netherlands</a>)</div></div>
<div class="c nu" style="left:285.5px;top:317.8px;width:45.8px;height:25.3px"><div>34</div></div>
<div class="c nu" style="left:331.3px;top:317.8px;width:45.2px;height:25.3px"><div>13</div></div>
<div class="c nu" style="left:376.5px;top:317.8px;width:51.8px;height:25.3px"><div>40,614</div></div>
<div class="c nu" style="left:428.3px;top:317.8px;width:48.9px;height:25.3px"><div>1,195</div></div>
<div class="c nu" style="left:477.2px;top:317.8px;width:46.2px;height:25.3px"><div>3,095</div></div>
<div class="c nu" style="left:523.4px;top:317.8px;width:48.2px;height:25.3px"><div>January 1,<br>2018</div></div>
<div class="c sr" style="left:571.6px;top:317.8px;width:94.9px;height:25.3px"><div><a class="x">Official estimate</a><svg class="ext" viewBox="0 0 12 12" width="5.6" height="5.6"><path d="M1.5 3.5h5v1.2H2.7v4.6h4.6V7h1.2v4.5h-7z" fill="#36b"/><path d="M6 1h5v5L9.2 4.2 6.3 7.1 4.9 5.7 7.8 2.8z" fill="#36b"/></svg></div></div>
<div class="c rk" style="left:101px;top:343.1px;width:29.3px;height:25.4px"><div>7</div></div>
<div class="c nm" style="left:130.3px;top:343.1px;width:155.2px;height:25.4px"><div><svg class="fl" viewBox="0 0 23 15" width="11.9" height="7.7" preserveAspectRatio="none"><rect width="23" height="15" fill="#0a6a4c"/><circle cx="10.3" cy="7.5" r="4.6" fill="#f0283c"/></svg>&nbsp;<a class="">Bangladesh</a></div></div>
<div class="c nu" style="left:285.5px;top:343.1px;width:45.8px;height:25.4px"><div>143,998</div></div>
<div class="c nu" style="left:331.3px;top:343.1px;width:45.2px;height:25.4px"><div>55,598</div></div>
<div class="c nu" style="left:376.5px;top:343.1px;width:51.8px;height:25.4px"><div>166,622,234</div></div>
<div class="c nu" style="left:428.3px;top:343.1px;width:48.9px;height:25.4px"><div>1,157</div></div>
<div class="c nu" style="left:477.2px;top:343.1px;width:46.2px;height:25.4px"><div>2,997</div></div>
<div class="c nu" style="left:523.4px;top:343.1px;width:48.2px;height:25.4px"><div>May 27,<br>2019</div></div>
<div class="c sr" style="left:571.6px;top:343.1px;width:94.9px;height:25.4px"><div><a class="x">Official population clock</a><svg class="ext" viewBox="0 0 12 12" width="5.6" height="5.6"><path d="M1.5 3.5h5v1.2H2.7v4.6h4.6V7h1.2v4.5h-7z" fill="#36b"/><path d="M6 1h5v5L9.2 4.2 6.3 7.1 4.9 5.7 7.8 2.8z" fill="#36b"/></svg></div></div>
<div class="c rk" style="left:101px;top:368.5px;width:29.3px;height:25.6px"><div><span style="position:relative;top:-0.6px">–</span></div></div>
<div class="c nm" style="left:130.3px;top:368.5px;width:155.2px;height:25.6px"><div><svg class="fl" viewBox="0 0 23 15" width="11.9" height="7.7" preserveAspectRatio="none"><rect width="23" height="15" fill="#fbfbfb"/><path d="M0 0L23 15M23 0L0 15" stroke="#e0202c" stroke-width="2"/><circle cx="11.5" cy="3" r="1.3" fill="#e0202c"/></svg>&nbsp;<i><a class="">Jersey</a></i> (<a class="">Crown dependency</a>)</div></div>
<div class="c nu" style="left:285.5px;top:368.5px;width:45.8px;height:25.6px"><div>116</div></div>
<div class="c nu" style="left:331.3px;top:368.5px;width:45.2px;height:25.6px"><div>45</div></div>
<div class="c nu" style="left:376.5px;top:368.5px;width:51.8px;height:25.6px"><div>104,200</div></div>
<div class="c nu" style="left:428.3px;top:368.5px;width:48.9px;height:25.6px"><div>898</div></div>
<div class="c nu" style="left:477.2px;top:368.5px;width:46.2px;height:25.6px"><div>2,326</div></div>
<div class="c nu" style="left:523.4px;top:368.5px;width:48.2px;height:25.6px"><div>December<br>31, 2016</div></div>
<div class="c sr" style="left:571.6px;top:368.5px;width:94.9px;height:25.6px"><div><a class="x">Official estimate</a> <svg class="pdf" viewBox="0 0 16 16" width="8" height="8"><path d="M2 0.5h8.5L14 4v11.5H2z" fill="#f3efe9" stroke="#b9b2a8" stroke-width=".8"/><path d="M3 11c3-1 5-5 4.6-8.2-.2-1.2-1.6-.8-1.2.8C7.200 7 10 10 13.400 10.400 14.800 10.600 14.600 9 13 9 9.500 9 5 11 3.600 13.200 2.800 14.400 1.600 12 3 11z" fill="none" stroke="#d8232a" stroke-width="1.5"/></svg></div></div>
<div class="c rk" style="left:101px;top:394.1px;width:29.3px;height:25.4px"><div><span style="position:relative;top:-0.6px">–</span></div></div>
<div class="c nm" style="left:130.3px;top:394.1px;width:155.2px;height:25.4px"><div><svg class="fl" viewBox="0 0 23 15" width="11.9" height="7.7" preserveAspectRatio="none"><rect width="23" height="15" fill="#fbfbfb"/><path d="M11.5 0V15M0 7.5H23" stroke="#e0202c" stroke-width="4.4"/><path d="M11.5 2V13M3 7.5H20" stroke="#f7c31c" stroke-width="1.4"/></svg>&nbsp;<i><a class="">Guernsey</a></i> (<a class="">Crown dependency</a>)</div></div>
<div class="c nu" style="left:285.5px;top:394.1px;width:45.8px;height:25.4px"><div>78</div></div>
<div class="c nu" style="left:331.3px;top:394.1px;width:45.2px;height:25.4px"><div>30</div></div>
<div class="c nu" style="left:376.5px;top:394.1px;width:51.8px;height:25.4px"><div>62,723</div></div>
<div class="c nu" style="left:428.3px;top:394.1px;width:48.9px;height:25.4px"><div>804</div></div>
<div class="c nu" style="left:477.2px;top:394.1px;width:46.2px;height:25.4px"><div>2,082</div></div>
<div class="c nu" style="left:523.4px;top:394.1px;width:48.2px;height:25.4px"><div>March 31,<br>2016</div></div>
<div class="c sr" style="left:571.6px;top:394.1px;width:94.9px;height:25.4px"><div><a class="x">Official estimate</a><svg class="ext" viewBox="0 0 12 12" width="5.6" height="5.6"><path d="M1.5 3.5h5v1.2H2.7v4.6h4.6V7h1.2v4.5h-7z" fill="#36b"/><path d="M6 1h5v5L9.2 4.2 6.3 7.1 4.9 5.7 7.8 2.8z" fill="#36b"/></svg></div></div>
<div class="c nm" style="left:130.3px;top:420px;width:150px;height:20px;align-items:flex-start"><div style="padding-top:0px;line-height:7px"><span style="display:inline-block;width:43.5px"></span><sup style="top:0;vertical-align:top"><a class="">[note 2]</a></sup></div></div>
<div class="hl" style="left:101px;top:45.1px;width:565.5px"></div>
<div class="hl" style="left:101px;top:70.8px;width:565.5px"></div>
<div class="hl" style="left:101px;top:96.5px;width:565.5px"></div>
<div class="hl" style="left:101px;top:122.3px;width:565.5px"></div>
<div class="hl" style="left:101px;top:147.5px;width:565.5px"></div>
<div class="hl" style="left:101px;top:162px;width:565.5px"></div>
<div class="hl" style="left:101px;top:187.1px;width:565.5px"></div>
<div class="hl" style="left:101px;top:212.8px;width:565.5px"></div>
<div class="hl" style="left:101px;top:226.9px;width:565.5px"></div>
<div class="hl" style="left:101px;top:241.2px;width:565.5px"></div>
<div class="hl" style="left:101px;top:266.5px;width:565.5px"></div>
<div class="hl" style="left:101px;top:292.2px;width:565.5px"></div>
<div class="hl" style="left:101px;top:317.3px;width:565.5px"></div>
<div class="hl" style="left:101px;top:342.6px;width:565.5px"></div>
<div class="hl" style="left:101px;top:368px;width:565.5px"></div>
<div class="hl" style="left:101px;top:393.6px;width:565.5px"></div>
<div class="hl" style="left:101px;top:419px;width:565.5px"></div>
<div class="vl" style="left:100.5px;top:31px;height:393px"></div>
<div class="vl" style="left:129.8px;top:31px;height:393px"></div>
<div class="vl" style="left:285px;top:31px;height:393px"></div>
<div class="vl" style="left:330.8px;top:31px;height:393px"></div>
<div class="vl" style="left:376px;top:31px;height:393px"></div>
<div class="vl" style="left:427.8px;top:31px;height:393px"></div>
<div class="vl" style="left:476.7px;top:31px;height:393px"></div>
<div class="vl" style="left:522.9px;top:31px;height:393px"></div>
<div class="vl" style="left:571.1px;top:31px;height:393px"></div>
<div class="vl" style="left:666px;top:31px;height:393px"></div>
<div class="cv" style="left:101.6px;top:44.6px;width:28.1px;height:2px"></div>
<div class="cv" style="left:101.6px;top:70.3px;width:28.1px;height:2px"></div>
<div id="sbar"></div>
<div id="tabbar"></div>
<div class="tl" style="left:5.200px;background:#ed6a5e;border:.4px solid #d65548"></div>
<div class="tl" style="left:13.300px;background:#f5bf4f;border:.4px solid #d9a33c"></div>
<div class="tl" style="left:21.400px;background:#62c554;border:.4px solid #4fa940"></div>
<!-- tab 1 -->
<div class="abs" style="left:36.200px;top:6.900px;width:6.600px;height:6.600px;border-radius:50%;background:#2b2fd0"></div>
<div class="abs" style="left:38.300px;top:8.600px;width:2.400px;height:3px;border:.5px solid #c9ccff;border-top:0;border-radius:0 0 1px 1px"></div>
<div class="tabt" style="left:46px;width:71px;-webkit-mask-image:linear-gradient(90deg,#000 90%,transparent 100%)">Population Densities of the World</div>
<div class="tabx" style="left:120.400px">×</div>
<div class="abs" style="left:128.200px;top:5px;width:.6px;height:8px;background:#8e9197"></div>
<!-- tab 2 -->
<svg class="abs" style="left:132.500px;top:6.800px" width="6.800" height="6.800" viewBox="0 0 14 14"><circle cx="7" cy="7" r="6.300" fill="#30333a"/><path d="M3 3.500c1.500 0 2 1 3 1s1.500-1.500 3-1l.5 1.500-2 1.500.5 2-1.500 1-1-2.500-2-.5zM8.500 8l2.500.5-.5 2.500-1.500.5z" fill="#dcdee2"/></svg>
<div class="tabt" style="left:143px;width:70px;-webkit-mask-image:linear-gradient(90deg,#000 90%,transparent 100%)">Population Densities of the World</div>
<div class="tabx" style="left:217.200px">×</div>
<!-- active tab -->
<div id="atab"></div>
<div class="abs" style="left:230.200px;top:5.600px;font-family:'Liberation Serif',serif;font-size:6px;line-height:8px;color:#1c1c1c;-webkit-text-stroke:.25px #1c1c1c">W</div>
<div class="tabt" style="left:239.500px;width:70.500px;color:#2a2c2f;-webkit-mask-image:linear-gradient(90deg,#000 90%,transparent 100%)">List of countries and dependencies by population density</div>
<div class="tabx" style="left:313.800px">×</div>
<div class="abs" style="left:328.600px;top:4.600px;font-size:8px;line-height:9px;color:#33363a;-webkit-text-stroke:.3px #33363a">+</div>
<!-- toolbar -->
<div id="toolbar">
<div id="pill"></div>
<svg class="abs" style="left:5.400px;top:4.300px" width="6.400" height="6" viewBox="0 0 13 12"><path d="M6 1L1.200 6 6 11M1.500 6H12.500" fill="none" stroke="#45494e" stroke-width="2"/></svg>
<svg class="abs" style="left:18.400px;top:4.300px" width="6.400" height="6" viewBox="0 0 13 12"><path d="M7 1l4.800 5L7 11M11.500 6H.5" fill="none" stroke="#b4b7bc" stroke-width="1.600"/></svg>
<svg class="abs" style="left:31.400px;top:3.900px" width="6.800" height="6.800" viewBox="0 0 14 14"><path d="M11.600 4.400A5.200 5.200 0 1 0 12.200 8" fill="none" stroke="#45494e" stroke-width="2.100"/><path d="M12.800 1v5h-5z" fill="#50545a"/></svg>
<svg class="abs" style="left:44.400px;top:3.700px" width="7.200" height="7" viewBox="0 0 14 14"><path d="M1 7l6-5.500L13 7M3 6v6.500h8V6" fill="none" stroke="#45494e" stroke-width="2.100"/></svg>
<svg class="abs" style="left:61.600px;top:4px" width="4.600" height="6" viewBox="0 0 9 12"><rect x=".5" y="5" width="8" height="6.500" rx="1" fill="#50545a"/><path d="M2.300 5V3.500a2.200 2.200 0 0 1 4.400 0V5" fill="none" stroke="#50545a" stroke-width="1.300"/></svg>
<div id="url"><span style="letter-spacing:.18px">https://</span><b style="letter-spacing:.05px">en.wikipedia.org</b><span style="letter-spacing:-.03px">/wiki/List_of_countries_and_dependencies_by_population_density</span></div>
<svg class="abs" style="left:625px;top:4.400px" width="6" height="6" viewBox="0 0 12 12"><circle cx="4.800" cy="4.800" r="3.500" fill="none" stroke="#6b6f75" stroke-width="1.400"/><path d="M7.400 7.400l3.800 3.800" stroke="#6b6f75" stroke-width="1.600"/></svg>
<svg class="abs" style="left:637.800px;top:3.800px" width="7" height="7" viewBox="0 0 14 14"><path d="M7 1.500l1.700 3.700 4 .4-3 2.700.9 4L7 10.200 3.400 12.300l.9-4-3-2.700 4-.4z" fill="none" stroke="#50545a" stroke-width="1.400" stroke-linejoin="round"/></svg>
<div class="abs" style="left:653.200px;top:2.700px;width:8.600px;height:8.600px;border-radius:50%;background:#2c2b30;overflow:hidden"><div class="abs" style="left:2.800px;top:1.800px;width:3px;height:3px;border-radius:50%;background:#d8c6bc"></div><div class="abs" style="left:1.800px;top:5px;width:5px;height:5px;border-radius:50%;background:#b9bcc6"></div></div>
<div class="abs" style="left:670.200px;top:3.800px;width:1.200px;height:1.200px;border-radius:50%;background:#50545a;box-shadow:0 2.300px 0 #50545a,0 4.600px 0 #50545a"></div>
</div>
</div>
<svg id="cursor" width="5" height="7.600" viewBox="0 0 10 15"><path d="M1 .8v11l2.600-2.400 1.900 4.400 1.900-.8-1.900-4.300H9z" fill="#111" stroke="#fff" stroke-width=".9"/></svg>
</div>
</body>
</html>
